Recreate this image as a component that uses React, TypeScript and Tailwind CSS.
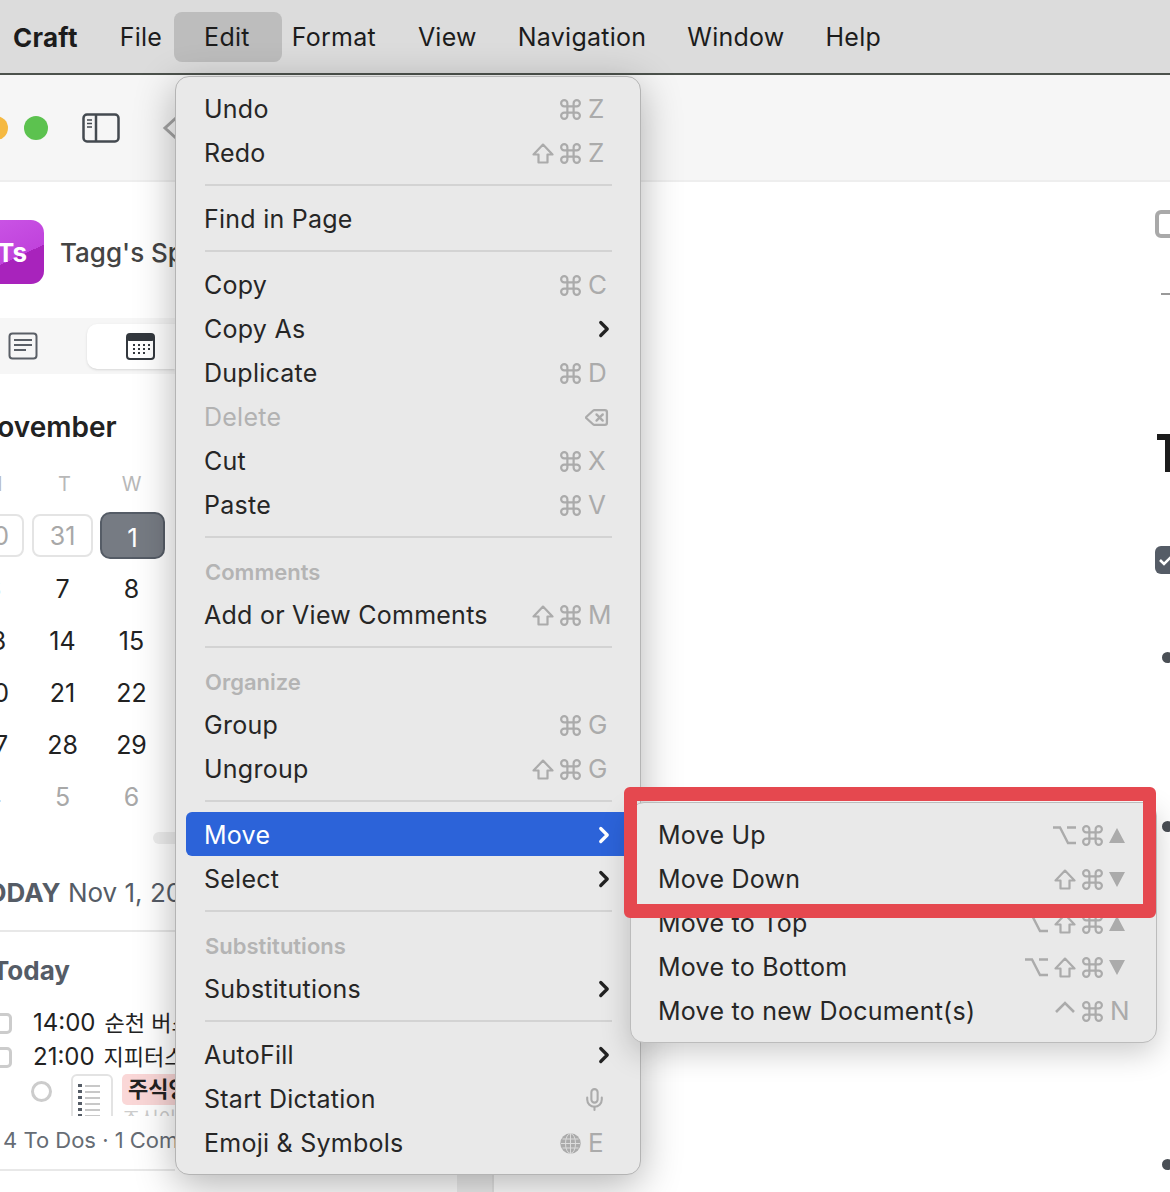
import React from "react";
import { Command, ChevronRight, Delete, Mic } from "lucide-react";

const font = { fontFamily: "Inter, 'Noto Sans CJK KR', sans-serif" };
const grey = "#ababab";

function Tri({ down }: { down?: boolean }) {
  return (
    <svg width="18" height="17" viewBox="0 0 18 17" className="-ml-[2px]">
      <path d={down ? "M1 1h16L9 16z" : "M9 1l8 15H1z"} fill={grey} />
    </svg>
  );
}

type K = string;

function Key({ k }: { k: K }) {
  if (k === "cmd") return <Command size={25} strokeWidth={2.1} color={grey} className="-m-[2px]" />;
  if (k === "shift")
    return (
      <svg width="22" height="21" viewBox="0 0 22 21" fill="none" stroke={grey} strokeWidth="2.2" strokeLinejoin="round">
        <path d="M11 1.6L20.5 11.5H15.5V19.5H6.5V11.5H1.5Z" />
      </svg>
    );
  if (k === "opt")
    return (
      <svg width="23" height="20" viewBox="0 0 23 20" fill="none" stroke={grey} strokeWidth="2.4">
        <path d="M0 2.5H7L15 18H23M14 2.5H23" />
      </svg>
    );
  if (k === "ctrl")
    return (
      <svg width="22" height="14" viewBox="0 0 22 14" className="mb-[8px]" fill="none" stroke={grey} strokeWidth="2.6">
        <path d="M2 12L11 3L20 12" />
      </svg>
    );
  if (k === "up") return <Tri />;
  if (k === "down") return <Tri down />;
  return <span className="text-[26px] leading-none text-[#ababab]">{k}</span>;
}

function Shortcut({ keys }: { keys: K[] }) {
  return (
    <span className="flex items-center gap-[6px] pt-[2px]">
      {keys.map((k, i) => (
        <span key={i} className={i === keys.length - 1 ? "ml-[1px] flex w-[23px] justify-start" : "flex justify-center"}>
          <Key k={k} />
        </span>
      ))}
    </span>
  );
}

function Sep() {
  return (
    <div className="flex h-[22px] items-center pl-[29px] pr-[28px]">
      <div className="h-[2px] w-full bg-[#d3d3d3]" />
    </div>
  );
}

function Row({ label, keys, sub, muted, active, right, inSub }: { label: string; keys?: K[]; sub?: boolean; muted?: boolean; active?: boolean; right?: React.ReactNode; inSub?: boolean }) {
  return (
    <div
      className={`mx-[10px] flex h-[44px] items-center justify-between rounded-[6px] text-[25px] tracking-[0.25px] ${inSub ? "pl-[17px] pr-[13px]" : "pl-[18px] pr-[19px]"} ${
        active ? "bg-[#2c63d9] text-white" : muted ? "text-[#b2b2b2]" : "text-[#262626]"
      }`}
    >
      <span className="pt-[4px]">{label}</span>
      {keys && <Shortcut keys={keys} />}
      {right}
      {sub && <ChevronRight size={26} strokeWidth={3} className={`-mr-[6px] mt-[2px] ${active ? "text-white" : "text-[#222222]"}`} />}
    </div>
  );
}

function Head({ label }: { label: string }) {
  return <div className="flex h-[44px] items-center pl-[29px] pt-[4px] text-[22px] font-semibold text-[#b4b4b4]">{label}</div>;
}

function EditMenu() {
  return (
    <div className="absolute left-[175px] top-[76px] z-10 w-[466px] rounded-[14px] border border-[#b4b4b4] bg-[#e9e9e9] pb-[10px] pt-[9px] shadow-[0_10px_40px_rgba(0,0,0,0.3)]">
      <Row label="Undo" keys={["cmd", "Z"]} />
      <Row label="Redo" keys={["shift", "cmd", "Z"]} />
      <Sep />
      <Row label="Find in Page" />
      <Sep />
      <Row label="Copy" keys={["cmd", "C"]} />
      <Row label="Copy As" sub />
      <Row label="Duplicate" keys={["cmd", "D"]} />
      <Row label="Delete" muted right={<Delete size={25} strokeWidth={2.2} color={grey} className="mr-[2px] mt-[2px]" />} />
      <Row label="Cut" keys={["cmd", "X"]} />
      <Row label="Paste" keys={["cmd", "V"]} />
      <Sep />
      <Head label="Comments" />
      <Row label="Add or View Comments" keys={["shift", "cmd", "M"]} />
      <Sep />
      <Head label="Organize" />
      <Row label="Group" keys={["cmd", "G"]} />
      <Row label="Ungroup" keys={["shift", "cmd", "G"]} />
      <Sep />
      <Row label="Move" sub active />
      <Row label="Select" sub />
      <Sep />
      <Head label="Substitutions" />
      <Row label="Substitutions" sub />
      <Sep />
      <Row label="AutoFill" sub />
      <Row label="Start Dictation" right={<Mic size={25} strokeWidth={2} color={grey} className="mr-[4px] mt-[2px]" />} />
      <Row
        label="Emoji & Symbols"
        right={
          <span className="flex items-center gap-[7px] pt-[2px]">
            <svg width="21" height="21" viewBox="0 0 21 21" fill={grey} stroke="#dcdcdc" strokeWidth="1">
              <circle cx="10.5" cy="10.5" r="10.2" stroke="none" />
              <path d="M1 10.5h19M2.5 6h16M2.5 15h16M10.5 0.5v20" fill="none" />
              <ellipse cx="10.5" cy="10.5" rx="5" ry="10" fill="none" />
            </svg>
            <span className="w-[23px] text-[26px] leading-none text-[#ababab]">E</span>
          </span>
        }
      />
    </div>
  );
}

function SubMenu() {
  return (
    <div className="absolute left-[630px] top-[802px] z-20 w-[527px] rounded-[14px] border border-[#bcbcbc] bg-[#e9e9e9] pb-[10px] pt-[9px] shadow-[0_10px_30px_rgba(0,0,0,0.2)]">
      <Row inSub label="Move Up" keys={["opt", "cmd", "up"]} />
      <Row inSub label="Move Down" keys={["shift", "cmd", "down"]} />
      <Row inSub label="Move to Top" keys={["opt", "shift", "cmd", "up"]} />
      <Row inSub label="Move to Bottom" keys={["opt", "shift", "cmd", "down"]} />
      <Row inSub label="Move to new Document(s)" keys={["ctrl", "cmd", "N"]} />
    </div>
  );
}

function MenuBar() {
  const items: [string, string][] = [
    ["Format", "mr-[42px]"],
    ["View", "mr-[41px]"],
    ["Navigation", "mr-[41px]"],
    ["Window", "mr-[41px]"],
    ["Help", "mr-[42px]"],
  ];
  return (
    <div className="flex h-[75px] items-center border-b-2 border-[#4c524c] bg-[#dcdcdc] pl-[13px] text-[25px] tracking-[0.25px] text-[#1c1c1c]">
      <span className="mr-[42px] pt-[2px] text-[26px] font-bold">Craft</span>
      <span className="mr-[42px] pt-[2px]">File</span>
      <span className="-ml-[30px] mr-[10px] flex h-[50px] items-center rounded-[8px] bg-[#bdbdbd] pl-[30px] pr-[32px] pt-[2px]">Edit</span>
      {items.map(([t, m]) => (
        <span key={t} className={`${m} pt-[2px]`}>
          {t}
        </span>
      ))}
    </div>
  );
}

function Toolbar() {
  return (
    <div className="relative flex h-[107px] items-center overflow-hidden border-b-2 border-[#eeeeee] bg-[#f6f6f6]">
      <div className="ml-[-16px] mr-[16px] h-[24px] w-[24px] rounded-full bg-[#f5b942]" />
      <div className="h-[24px] w-[24px] rounded-full bg-[#5cc24f]" />
      <svg width="38" height="30" viewBox="0 0 38 30" className="ml-[34px] text-[#444a50]" fill="none" stroke="currentColor" strokeWidth="2.5">
        <rect x="1.5" y="1.5" width="35" height="27" rx="3.5" />
        <path d="M14 1.5v27" />
        <path d="M5 7h5M5 10.5h5M5 14h5" strokeWidth="1.5" />
      </svg>
      <svg width="18" height="30" viewBox="0 0 18 30" className="ml-[42px] text-[#a4a4a4]" fill="none" stroke="currentColor" strokeWidth="3">
        <path d="M15 4L3 15l12 11" />
      </svg>
    </div>
  );
}

function Day({ n, kind }: { n: string; kind?: "muted" | "box" | "sel" }) {
  if (kind === "sel")
    return <div className="ml-[3px] flex h-[47px] w-[65px] items-center justify-center rounded-[10px] border-2 border-[#555c66] bg-[#767b83] pt-[3px] text-[26px] text-white">{n}</div>;
  if (kind === "box")
    return <div className="mx-auto mt-[2px] flex h-[43px] w-[61px] items-center justify-center rounded-[8px] border-2 border-[#e4e4e4] pt-[3px] text-[25px] text-[#a8a8a8]">{n}</div>;
  return <div className={`text-center text-[25px] leading-[47px] ${kind === "muted" ? "text-[#a8a8a8]" : "text-[#222222]"}`}>{n}</div>;
}

function Sidebar() {
  const rows: [string, string, string, ("muted" | "box" | "sel")?][] = [
    ["6", "7", "8"],
    ["13", "14", "15"],
    ["20", "21", "22"],
    ["27", "28", "29"],
    ["4", "5", "6", "muted"],
  ];
  return (
    <div className="flex w-[494px] shrink-0 justify-between border-r-2 border-[#e4e4e4]">
      <div className="w-[175px] shrink-0 overflow-hidden">
        <div className="mt-[38px] flex items-center">
          <div className="ml-[-20px] flex h-[64px] w-[64px] shrink-0 items-center justify-center rounded-[13px] bg-[linear-gradient(155deg,#cb56e6_0%,#c043dc_58%,#a823bc_58%,#a823bc_100%)] text-[26px] font-bold text-white">
            Ts
          </div>
          <span className="ml-[16px] mt-[1px] whitespace-nowrap text-[26px] font-medium text-[#444444]">Tagg's Space</span>
        </div>
        <div className="mt-[34px] flex h-[56px] items-center bg-[#f6f6f6]">
          <svg width="30" height="28" viewBox="0 0 30 28" className="ml-[8px] text-[#5a5f66]" fill="none" stroke="currentColor" strokeWidth="2">
            <rect x="1.5" y="1.5" width="27" height="25" rx="3" />
            <path d="M6 8h18M6 13h18M6 18h12" />
          </svg>
          <div className="ml-[49px] flex h-[45px] flex-1 items-center rounded-l-[10px] bg-white pl-[39px] shadow-sm">
            <svg width="29" height="27" viewBox="0 0 29 27" className="text-[#33383e]">
              <rect x="1" y="1" width="27" height="25" rx="3" fill="none" stroke="currentColor" strokeWidth="2" />
              <rect x="1" y="1" width="27" height="7" rx="2" fill="currentColor" />
              <path d="M7 12h2M12 12h2M17 12h2M22 12h2M7 16h2M12 16h2M17 16h2M22 16h2M7 20h2M12 20h2M17 20h2" stroke="currentColor" strokeWidth="2" />
            </svg>
          </div>
        </div>
        <div className="mt-[33px] ml-[-24px] whitespace-nowrap text-[28px] font-semibold leading-[40px] text-[#222222]">November</div>
        <div className="ml-[-41px] grid w-[207px] grid-cols-3 text-center">
          <div className="mt-[25px] text-[20px] leading-[24px] text-[#b8b8b8]">M</div>
          <div className="mt-[25px] pl-[4px] text-[20px] leading-[24px] text-[#b8b8b8]">T</div>
          <div className="mt-[25px] text-[20px] leading-[24px] text-[#b8b8b8]">W</div>
          <div className="col-span-3 mt-[16px] grid h-[47px] grid-cols-3">
            <Day n="30" kind="box" />
            <Day n="31" kind="box" />
            <Day n="1" kind="sel" />
          </div>
          {rows.map((r, i) => (
            <div key={r[1]} className={`col-span-3 grid h-[47px] grid-cols-3 ${i === 0 ? "mt-[7px]" : "mt-[5px]"}`}>
              <Day n={r[0]} kind={r[3]} />
              <Day n={r[1]} kind={r[3]} />
              <Day n={r[2]} kind={r[3]} />
            </div>
          ))}
        </div>
        <div className="ml-[153px] mt-[11px] h-[12px] w-[30px] rounded-l-full bg-[#eeeeee]" />
        <div className="ml-[-30px] mt-[31px] whitespace-nowrap text-[26px] leading-[36px] text-[#555c66]">
          <span className="font-bold">TODAY</span> Nov 1, 2023
        </div>
        <div className="mt-[19px] h-[2px] bg-[#e8e8e8]" />
        <div className="ml-[-8px] mt-[21px] text-[26px] font-bold leading-[36px] text-[#555c66]">Today</div>
        <div className="ml-[-14px] mt-[17px] flex h-[34px] items-center whitespace-nowrap text-[24px] text-[#222222]">
          <div className="mr-[21px] h-[21px] w-[26px] shrink-0 rounded-[5px] border-[3px] border-[#cccccc]" />
          14:00 <span className="ml-[9px] text-[22px]">순천 버스 터미널</span>
        </div>
        <div className="ml-[-14px] flex h-[34px] items-center whitespace-nowrap text-[24px] text-[#222222]">
          <div className="mr-[21px] h-[21px] w-[26px] shrink-0 rounded-[5px] border-[3px] border-[#cccccc]" />
          21:00 <span className="ml-[9px] text-[22px]">지피터스 모임</span>
        </div>
        <div className="flex h-[42px] items-start overflow-hidden whitespace-nowrap">
          <div className="ml-[31px] mt-[7px] h-[21px] w-[21px] shrink-0 rounded-full border-[3px] border-[#cccccc]" />
          <div className="ml-[19px] flex h-[60px] w-[42px] shrink-0 flex-col gap-[3px] rounded-[6px] border-2 border-[#e3e3e3] px-[5px] pt-[8px]">
            {[0, 1, 2, 3, 4, 5].map((i) => (
              <div key={i} className="flex items-center gap-[3px]">
                <div className="h-[3px] w-[4px] bg-[#555c66]" />
                <div className="h-[2px] w-[15px] bg-[#c8c8c8]" />
              </div>
            ))}
          </div>
          <div className="ml-[9px]">
            <div className="flex h-[31px] items-center rounded-[5px] bg-[#fad7d7] px-[6px] text-[22px] font-bold text-[#222222]">주식양도</div>
            <div className="text-[20px] text-[#cccccc]">주식아</div>
          </div>
        </div>
        <div className="ml-[3px] mt-[8px] whitespace-nowrap text-[22px] leading-[32px] text-[#666c74]">4 To Dos · 1 Completed</div>
        <div className="mt-[13px] h-[2px] bg-[#e8e8e8]" />
      </div>
      <div className="w-[35px] bg-[#eeeeee]" />
    </div>
  );
}

function MainPane() {
  return (
    <div className="flex flex-1 justify-end overflow-hidden">
      <div className="w-[15px] overflow-hidden">
        <div className="mt-[28px] h-[28px] w-[30px] rounded-[6px] border-[4px] border-[#a9a9a9]" />
        <div className="ml-[6px] mt-[55px] h-[2px] w-[9px] bg-[#999999]" />
        <div className="ml-[2px] mt-[139px] h-[38px] w-[30px] border-t-[6px] border-[#1c1c1c]">
          <div className="ml-[8px] h-[32px] w-[6px] bg-[#1c1c1c]" />
        </div>
        <div className="mt-[74px] flex h-[28px] w-[30px] items-center rounded-[6px] bg-[#555c66] pl-[4px]">
          <svg width="14" height="12" viewBox="0 0 14 12" fill="none" stroke="white" strokeWidth="2.5">
            <path d="M1 6l4 4 8-8" />
          </svg>
        </div>
        <div className="ml-[7px] mt-[78px] h-[11px] w-[11px] rounded-full bg-[#4a4f55]" />
        <div className="ml-[7px] mt-[158px] h-[11px] w-[11px] rounded-full bg-[#4a4f55]" />
        <div className="ml-[7px] mt-[327px] h-[11px] w-[11px] rounded-full bg-[#4a4f55]" />
      </div>
    </div>
  );
}

export default function App() {
  return (
    <div style={font} className="relative h-[1192px] w-[1170px] overflow-hidden bg-white antialiased">
      <MenuBar />
      <Toolbar />
      <div className="flex h-[1010px]">
        <Sidebar />
        <MainPane />
      </div>
      <EditMenu />
      <SubMenu />
      <div className="absolute left-[624px] top-[787px] z-30 h-[131px] w-[532px] rounded-[6px] border-x-[13px] border-y-[14px] border-[#e5484f]" />
    </div>
  );
}
